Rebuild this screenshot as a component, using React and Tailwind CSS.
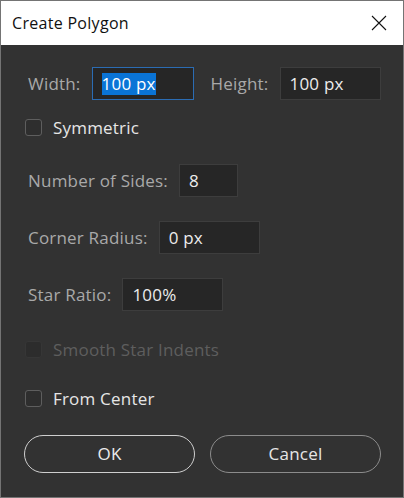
import React from 'react';

const font = { fontFamily: '"Open Sans", "Noto Sans", sans-serif' };

const Field = ({ label, value, width, focused }) => (
  <div className="flex items-center">
    <span className="text-[17px] tracking-[0.2px] text-[#a9a9a9] mr-[11px]">{label}</span>
    <div
      className={`h-[33px] flex items-center pl-[9px] bg-[#262626] border ${
        focused ? 'border-[#2b6cb3]' : 'border-[#3d3d3d]'
      } ${width}`}
    >
      {focused ? (
        <span className="text-[17px] tracking-[0.2px] leading-[22px] text-white bg-[#0a74d6]">{value}</span>
      ) : (
        <span className="text-[17px] tracking-[0.2px] text-[#ececec]">{value}</span>
      )}
    </div>
  </div>
);

const Check = ({ label, disabled }) => (
  <div className="flex items-center ml-[24px]">
    <div
      className={`w-[17px] h-[17px] rounded-[3px] border ${
        disabled ? 'border-[#363636] bg-[#2c2c2c]' : 'border-[#5e5e5e] bg-[#2e2e2e]'
      }`}
    />
    <span
      className={`ml-[11px] text-[17px] tracking-[0.2px] ${disabled ? 'text-[#5e5e5e]' : 'text-[#e6e6e6]'}`}
    >
      {label}
    </span>
  </div>
);

export default function App() {
  return (
    <div className="w-[404px] h-[498px] border border-[#747474] bg-[#323232] flex flex-col" style={font}>
      {/* Title bar */}
      <div className="h-[44px] bg-white flex items-center justify-between pl-[11px] pr-[16px] shrink-0">
        <span className="text-[16px] tracking-[0.3px] text-[#111]">Create Polygon</span>
        <svg width="16" height="16" viewBox="0 0 16 16">
          <path d="M1 1 L15 15 M15 1 L1 15" stroke="#111" strokeWidth="1.1" />
        </svg>
      </div>

      {/* Body */}
      <div className="flex flex-col pt-[22px]">
        <div className="flex items-center pl-[27px]">
          <Field label="Width:" value="100 px" width="w-[102px]" focused />
          <div className="ml-[17px]">
            <Field label="Height:" value="100 px" width="w-[101px]" />
          </div>
        </div>

        <div className="mt-[18px] h-[19px] flex items-center">
          <Check label="Symmetric" />
        </div>

        <div className="mt-[27px] pl-[27px] flex flex-col gap-[24px]">
          <Field label="Number of Sides:" value="8" width="w-[59px]" />
          <Field label="Corner Radius:" value="0 px" width="w-[101px]" />
          <Field label="Star Ratio:" value="100%" width="w-[101px]" />
        </div>

        <div className="mt-[29px] h-[19px] flex items-center">
          <Check label="Smooth Star Indents" disabled />
        </div>
        <div className="mt-[30px] h-[19px] flex items-center">
          <Check label="From Center" />
        </div>

        <div className="mt-[27px] flex gap-[15px] pl-[23px]">
          <button className="w-[171px] h-[38px] rounded-full border border-[#cfcfcf] text-[17px] tracking-[0.2px] text-[#ececec]">
            OK
          </button>
          <button className="w-[171px] h-[38px] rounded-full border border-[#8c8c8c] text-[17px] tracking-[0.2px] text-[#e6e6e6]">
            Cancel
          </button>
        </div>
      </div>
    </div>
  );
}
